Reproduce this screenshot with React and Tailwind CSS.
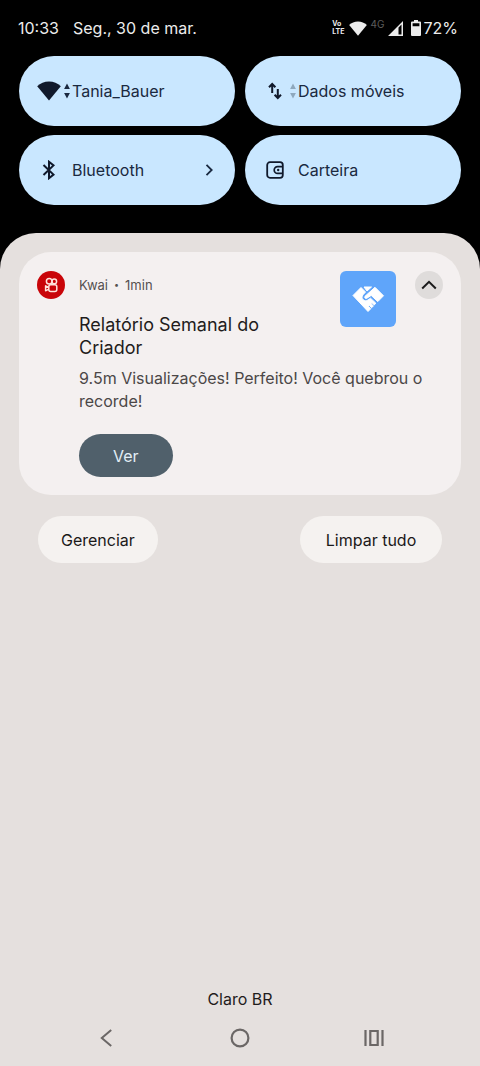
function WifiIcon({ className }) {
  return (
    <svg viewBox="0 0 24 20" className={className} fill="currentColor" aria-hidden="true">
      <path d="M12 0.5C7.4 0.5 3.3 2.2 0.2 5.2L12 19.5 23.8 5.2C20.7 2.2 16.6 0.5 12 0.5z" />
    </svg>
  );
}

function ActivityArrows({ className }) {
  return (
    <svg viewBox="0 0 6 16" className={className} fill="currentColor" aria-hidden="true">
      <path d="M3 0.5L5.9 6H0.1zM3 15.5L5.9 10H0.1z" />
    </svg>
  );
}

function SwapIcon() {
  return (
    <svg viewBox="0 0 14 18" className="h-[18px] w-3.5" fill="none" stroke="currentColor" strokeWidth="2" aria-hidden="true">
      <path d="M4.2 11V2.5M1 5.2L4.2 2l3.2 3.2M9.8 7v8.5M6.6 12.8L9.8 16l3.2-3.2" />
    </svg>
  );
}

function BluetoothIcon() {
  return (
    <svg viewBox="0 0 14 20" className="h-5 w-3.5" fill="none" stroke="currentColor" strokeWidth="2" aria-hidden="true">
      <path d="M1.5 5l10 9.6L7 18.2V1.8l4.5 3.6-10 9.6" />
    </svg>
  );
}

function WalletIcon() {
  return (
    <svg viewBox="0 0 18 18" className="size-[18px]" fill="none" stroke="currentColor" strokeWidth="1.8" aria-hidden="true">
      <rect x="1.2" y="1.2" width="15.6" height="15.6" rx="2.8" />
      <path d="M17 5.600h-5.400a3.400 3.400 0 0 0 0 6.800H17" strokeWidth="1.7" />
      <circle cx="12.200" cy="9" r="1.2" fill="currentColor" stroke="none" />
    </svg>
  );
}

function KwaiIcon() {
  return (
    <svg viewBox="0 0 28 28" className="size-7 shrink-0" role="img" aria-label="Kwai">
      <circle cx="14" cy="14" r="14" fill="#c90509" />
      <g fill="none" stroke="#ffe3dc" strokeWidth="1.5" strokeLinejoin="round">
        <circle cx="12.200" cy="10.2" r="2.8" />
        <circle cx="17.3" cy="10.4" r="2.3" />
        <rect x="11.8" y="13.800" width="8" height="6.700" rx="2" />
        <path d="M11.8 16.4l-3.200-1.600v5l3.200-1.600" />
      </g>
    </svg>
  );
}

function HandshakeIcon() {
  return (
    <svg viewBox="0 0 56 56" className="size-14" role="img" aria-label="Parceria">
      <g fill="#fff" stroke="#fff" strokeWidth="1" strokeLinejoin="round">
        <path d="M13 24.500L21 16.500 25.500 21 23 23.800c-1.400 1.600-1.200 3.400 0 4.800 1.400 1.500 3.400 1.500 5 .4l2.500-1.800 5.300 5-1.500 1.700-2.300-2.100-.8.900 2.200 2.300-1.700 1.700-2.300-2.300-.9.900 2.300 2.400-2.800 2.800z" />
        <path d="M24 16h7.500l-4.500 4z" />
        <path d="M35 16.300l8.500 8.500-5.700 5.800-6.600-6.200-4.700 3c-1.300.5-2.300-1-1.500-2.100z" />
      </g>
    </svg>
  );
}

function StatusBar() {
  return (
    <header className="flex h-14 items-center justify-between pr-[22px] pl-[18px] text-base text-[#ececec]">
      <div className="flex gap-3.5">
        <time>10:33</time>
        <span>Seg., 30 de mar.</span>
      </div>
      <div className="flex items-center">
        <div className="mr-1 flex flex-col text-[7px] leading-[8px] font-bold">
          <span>Vo</span>
          <span>LTE</span>
        </div>
        <WifiIcon className="h-[15px] w-[18px]" />
        <span className="mr-1 ml-1 self-start text-[10px] leading-4 text-[#5c5c5c]">4G</span>
        <svg viewBox="0 0 15 15" className="mr-2 size-[15px]" fill="currentColor" aria-hidden="true">
          <path fillRule="evenodd" d="M15 0v15H0zM10.5 6.5v7h3v-10z" />
        </svg>
        <svg viewBox="0 0 10 16" className="mr-0.5 h-4 w-2.5" fill="currentColor" aria-hidden="true">
          <path fillRule="evenodd" d="M3 0h4v1.6h2a1 1 0 0 1 1 1V15a1 1 0 0 1-1 1H1a1 1 0 0 1-1-1V2.600a1 1 0 0 1 1-1h2zM1.600 3.200v3h6.800v-3z" />
        </svg>
        <span>72%</span>
      </div>
    </header>
  );
}

function Tile({ icon, activity, label, chevron }) {
  return (
    <button
      type="button"
      className="flex h-[70px] items-center rounded-[35px] bg-[#c9e7ff] pr-5 pl-[18px] text-left text-base text-[#1a2940]"
    >
      <span className="flex w-6 shrink-0 justify-center text-[#10192b]">{icon}</span>
      <span className="flex w-[11px] shrink-0 justify-center">{activity}</span>
      <span className="flex-1 whitespace-nowrap">{label}</span>
      {chevron && (
        <svg viewBox="0 0 12 12" className="size-3" fill="none" stroke="currentColor" strokeWidth="1.8" aria-hidden="true">
          <path d="M3.500 0.800L8.700 6l-5.200 5.200" />
        </svg>
      )}
    </button>
  );
}

function Notification() {
  return (
    <article className="rounded-[32px] bg-[#f4f0f0] px-[18px] pt-[19px] pb-[18px]">
      <div className="flex items-start">
        <KwaiIcon />
        <div className="ml-3.5 flex-1">
          <p className="flex items-center gap-1.5 text-[13px] leading-7 text-[#555151]">
            <span>Kwai</span>
            <span className="text-[9px]">•</span>
            <span>1min</span>
          </p>
          <h2 className="mt-3.5 max-w-[210px] text-lg leading-[23px] text-[#1f1c1c]">
            Relatório Semanal do Criador
          </h2>
        </div>
        <div className="rounded-md bg-[#5fa5fa]">
          <HandshakeIcon />
        </div>
        <button
          type="button"
          aria-label="Recolher"
          className="ml-[19px] flex size-7 items-center justify-center rounded-full bg-[#dfdcdb] text-[#1b1b1b]"
        >
          <svg viewBox="0 0 16 10" className="h-2.5 w-4" fill="none" stroke="currentColor" strokeWidth="2" aria-hidden="true">
            <path d="M1.200 8.500L8 1.800l6.800 6.700" />
          </svg>
        </button>
      </div>
      <div className="mt-2 ml-[42px]">
        <p className="text-base leading-[23px] text-[#4b4747]">
          9.5m Visualizações! Perfeito! Você quebrou o recorde!
        </p>
        <button type="button" className="mt-[21px] h-[43px] rounded-full bg-[#50606b] px-[34px] text-base text-[#e2eef6]">
          Ver
        </button>
      </div>
    </article>
  );
}

function NavBar() {
  return (
    <nav className="flex h-14 items-center justify-between px-[92px] text-[#6b6766]">
      <button type="button" aria-label="Voltar" className="flex size-7 items-center justify-center">
        <svg viewBox="0 0 12 18" className="h-[18px] w-3" fill="none" stroke="currentColor" strokeWidth="2">
          <path d="M11.200 1L1.800 9l9.400 8" />
        </svg>
      </button>
      <button type="button" aria-label="Início" className="flex size-7 items-center justify-center">
        <svg viewBox="0 0 20 20" className="size-5" fill="none" stroke="currentColor" strokeWidth="2.2">
          <circle cx="10" cy="10" r="8.400" />
        </svg>
      </button>
      <button type="button" aria-label="Recentes" className="flex size-7 items-center justify-center">
        <svg viewBox="0 0 20 18" className="h-[18px] w-5" fill="none" stroke="currentColor" strokeWidth="2.200">
          <path d="M1.500 1v16M18.500 1v16M6.300 2h7.400v14H6.300z" />
        </svg>
      </button>
    </nav>
  );
}

export default function App() {
  return (
    <div className="flex min-h-screen flex-col bg-black font-['Inter',sans-serif]">
      <StatusBar />
      <section className="grid grid-cols-2 gap-x-2.5 gap-y-[9px] px-[19px] pb-7">
        <Tile
          icon={<WifiIcon className="h-5 w-6" />}
          activity={<ActivityArrows className="h-4 w-1.5" />}
          label="Tania_Bauer"
        />
        <Tile
          icon={<SwapIcon />}
          activity={<ActivityArrows className="h-4 w-1.5 text-[#8ea8bd]" />}
          label="Dados móveis"
        />
        <Tile icon={<BluetoothIcon />} label="Bluetooth" chevron />
        <Tile icon={<WalletIcon />} label="Carteira" />
      </section>
      <main className="flex flex-1 flex-col rounded-t-[36px] bg-[#e5e0de] pt-[19px]">
        <div className="px-[19px]">
          <Notification />
          <div className="mt-[21px] flex justify-between px-[19px] text-base text-[#1b1919]">
            <button type="button" className="h-[47px] rounded-full bg-[#f5f2f0] px-[23px]">
              Gerenciar
            </button>
            <button type="button" className="h-[47px] min-w-[142px] rounded-full bg-[#f5f2f0] px-[23px]">
              Limpar tudo
            </button>
          </div>
        </div>
        <p className="mt-auto text-center text-base leading-[22px] text-[#1f1c1c]">Claro BR</p>
        <NavBar />
      </main>
    </div>
  );
}
